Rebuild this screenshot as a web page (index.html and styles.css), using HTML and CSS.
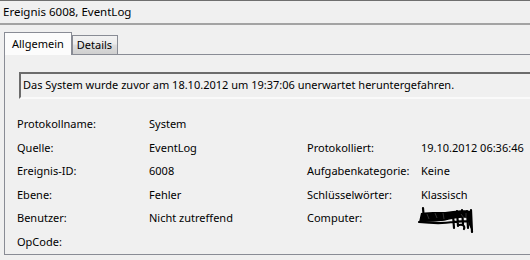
FILE: index.html
```html
<!DOCTYPE html>
<html lang="de">
<head>
<meta charset="utf-8">
<title>Ereignis 6008, EventLog</title>
<link rel="stylesheet" href="styles.css">
</head>
<body>
<div class="window">
  <div class="titlebar">Ereignis 6008, EventLog</div>
  <div class="body">
    <div class="tabs">
      <div class="tab active">Allgemein</div>
      <div class="tab">Details</div>
    </div>
    <div class="panel">
      <div class="message">Das System wurde zuvor am 18.10.2012 um 19:37:06 unerwartet heruntergefahren.</div>
      <div class="props">
        <span class="label">Protokollname:</span><span class="value">System</span><span></span><span></span>
        <span class="label">Quelle:</span><span class="value">EventLog</span><span class="label">Protokolliert:</span><span class="value">19.10.2012 06:36:46</span>
        <span class="label">Ereignis-ID:</span><span class="value">6008</span><span class="label">Aufgabenkategorie:</span><span class="value">Keine</span>
        <span class="label">Ebene:</span><span class="value">Fehler</span><span class="label">Schlüsselwörter:</span><span class="value">Klassisch</span>
        <span class="label">Benutzer:</span><span class="value">Nicht zutreffend</span><span class="label">Computer:</span><span class="value redacted"><svg width="58" height="28" viewBox="0 0 58 28"><path d="M4 8 C14 6 26 8 36 6 C44 5 50 5 54 6 L55 26 L52 20 L50 13 C44 12 36 14 30 15 C22 17 12 16 2 17 Z" fill="#000"/><path d="M6 3 L7 15 M4 16 C12 15 22 16 30 14 M2 17 C12 18 24 19 36 17 C44 16 50 17 54 15 M40 6 L41 21 M45 5 L46 19 M50 6 L51 23 M54 5 L55 27 M36 10 L37 23 M42 20 C46 19 48 21 47 24" stroke="#000" stroke-width="2.2" fill="none" stroke-linecap="round"/><path d="M10 9 L12 14 M18 8 L20 13 M26 8 L27 14 M44 9 L47 13 M49 8 L49 13" stroke="#333" stroke-width="1" fill="none"/></svg></span>
        <span class="label">OpCode:</span><span class="value"></span><span></span><span></span>
      </div>
    </div>
  </div>
</div>
</body>
</html>
```

FILE: styles.css
```css
html, body {
  margin: 0;
  padding: 0;
  background: #f0f0f0;
}
body {
  font-family: "Noto Sans", "Open Sans", sans-serif;
  font-size: 11px;
  color: #000;
  width: 530px;
  height: 260px;
  overflow: hidden;
}
.window {
  border-top: 1px solid #6f6f6f;
}
.titlebar {
  line-height: 21px;
  padding-left: 3px;
  border-bottom: 2px solid #a3a3a3;
  box-sizing: border-box;
  height: 24px;
  font-size: 11.5px;
}
.body {
  padding: 7px 0 0 4px;
}
.tabs {
  display: flex;
  align-items: flex-end;
  height: 22px;
  position: relative;
  z-index: 1;
}
.tab {
  box-sizing: border-box;
  border: 1px solid #898c95;
  border-bottom: none;
  padding: 0 5px 0 4px;
  height: 19px;
  line-height: 18px;
  background: linear-gradient(#f2f2f2, #ebebeb 45%, #dddddd 50%, #cfcfcf);
}
.tab.active {
  height: 23px;
  padding: 0 7px;
  margin-bottom: -1px;
  background: #fcfcfc;
  line-height: 22px;
}
.panel {
  border: 1px solid #898c95;
  border-right: none;
  height: 201px;
  box-sizing: border-box;
  padding: 17px 0 0 14px;
}
.message {
  height: 27px;
  box-sizing: border-box;
  border-top: 2px solid #6c6c6c;
  border-left: 2px solid #6c6c6c;
  border-bottom: 2px solid #fafafa;
  line-height: 22px;
  padding-left: 2px;
  white-space: nowrap;
  overflow: hidden;
}
.props {
  display: grid;
  grid-template-columns: 132px 158px 114px auto;
  grid-auto-rows: 23.6px;
  margin: 13px 0 0 -2px;
  line-height: 23.6px;
}
.redacted svg {
  vertical-align: top;
  margin-top: -1px;
  margin-left: -4px;
}
```
